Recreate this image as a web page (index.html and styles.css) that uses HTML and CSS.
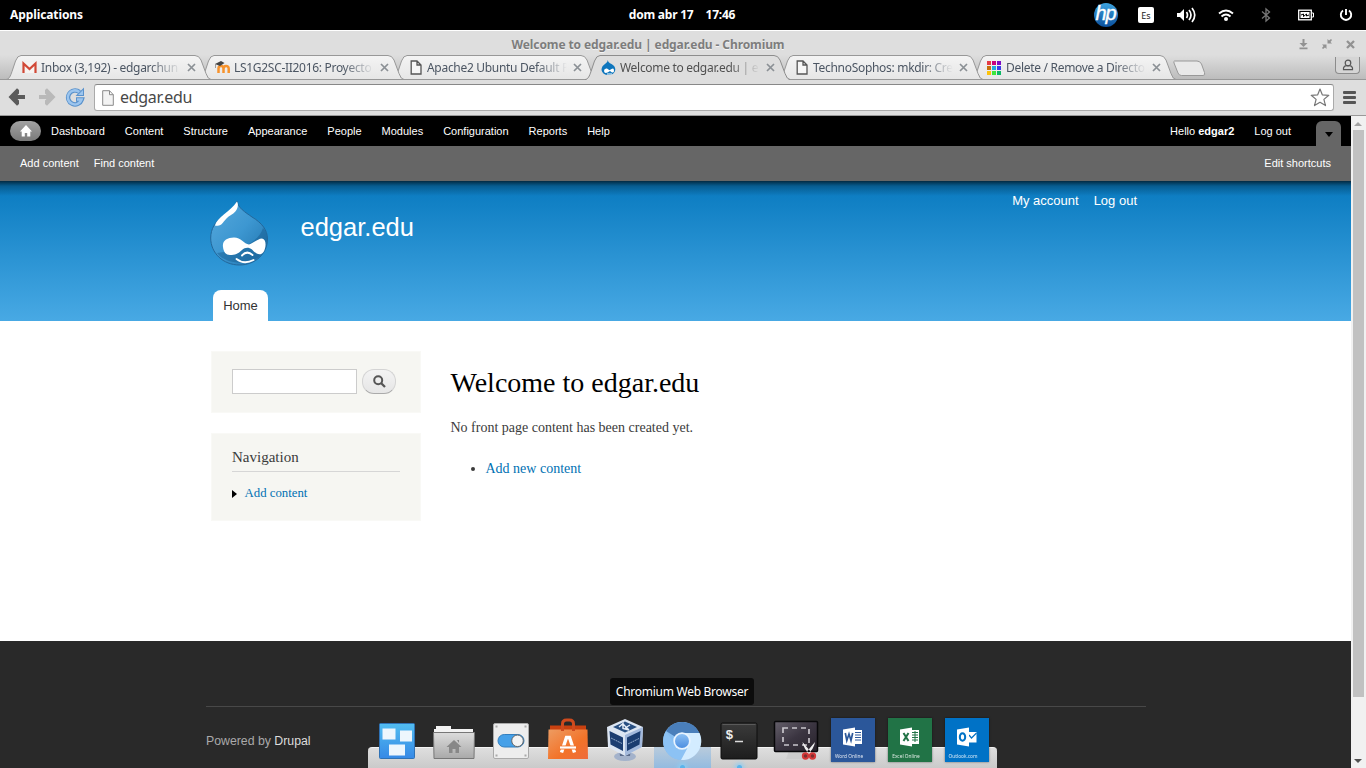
FILE: index.html
```html
<!DOCTYPE html>
<html lang="en">
<head>
<meta charset="utf-8">
<title>Welcome to edgar.edu | edgar.edu</title>
<link rel="stylesheet" href="styles.css">
</head>
<body>
<svg class="defs" width="0" height="0" aria-hidden="true">
  <defs>
    <linearGradient id="tabFill" x1="0" y1="0" x2="0" y2="1"><stop offset="0" stop-color="#f4f4f4"/><stop offset="1" stop-color="#e6e6e6"/></linearGradient>
    <linearGradient id="dropFill" x1="0" y1="0" x2="1" y2="1"><stop offset="0" stop-color="#58a9dc"/><stop offset=".5" stop-color="#3d97d1"/><stop offset="1" stop-color="#1d70aa"/></linearGradient>
    <linearGradient id="winFill" x1="0" y1="0" x2="0" y2="1"><stop offset="0" stop-color="#52bdf0"/><stop offset="1" stop-color="#3689e6"/></linearGradient>
    <linearGradient id="folderFill" x1="0" y1="0" x2="0" y2="1"><stop offset="0" stop-color="#dcdcdc"/><stop offset="1" stop-color="#a9a9a9"/></linearGradient>
    <linearGradient id="bagFill" x1="0" y1="0" x2="1" y2="1"><stop offset="0" stop-color="#ed9c62"/><stop offset=".6" stop-color="#f37329"/><stop offset="1" stop-color="#ee6b3c"/></linearGradient>
    <linearGradient id="termFill" x1="0" y1="0" x2="0" y2="1"><stop offset="0" stop-color="#3b3b3b"/><stop offset="1" stop-color="#1d1d1d"/></linearGradient>
    <linearGradient id="screenFill" x1="0" y1="0" x2="1" y2="1"><stop offset="0" stop-color="#65606b"/><stop offset=".5" stop-color="#3b3541"/><stop offset="1" stop-color="#28232c"/></linearGradient>
    <linearGradient id="coreFill" x1="0" y1="0" x2="0" y2="1"><stop offset="0" stop-color="#8cc0f4"/><stop offset="1" stop-color="#4d8ee0"/></linearGradient>
    <linearGradient id="hpFill" x1="0" y1="0" x2="0" y2="1"><stop offset="0" stop-color="#3da3de"/><stop offset="1" stop-color="#0a4f9c"/></linearGradient>
    <symbol id="tab" viewBox="0 0 206 25">
      <path d="M0 24.500C3 24.500 4.500 21 6 16.500L9.500 6Q11.500.5 15 .5H189Q193 .5 195 5L200 18.500Q202 24.500 205 24.500Z" fill="url(#tabFill)" stroke="#989898"/>
    </symbol>
    <symbol id="tabOn" viewBox="0 0 206 25">
      <path d="M0 25C3 24.500 4.500 21 6 16.500L9.500 6Q11.500.5 15 .5H189Q193 .5 195 5L200 18.500Q202 24.500 205 25Z" fill="#dedede"/>
      <path d="M0 24.500C3 24.500 4.500 21 6 16.500L9.500 6Q11.500.5 15 .5H189Q193 .5 195 5L200 18.500Q202 24.500 205 24.500" fill="none" stroke="#8d8d8d"/>
    </symbol>
    <symbol id="x" viewBox="0 0 9 9"><path d="M1 1l7 7M8 1l-7 7" stroke="#8b9095" stroke-width="1.700"/></symbol>
    <symbol id="doc" viewBox="0 0 12 15"><path d="M1.200 1H7l4 4v9H1.200zM7 1v4h4" fill="#f6f6f6" stroke="#555" stroke-width="1.300"/></symbol>
    <symbol id="drop" viewBox="0 0 58 66">
      <path d="M27 0C28 7 35 11 42 16C52 22 57.500 29 57.500 38C57.500 53 45 64 29.500 64C13 64 .7 52 .7 37C.7 28 5 21 12 16C20 11 25.500 7 27 0Z" fill="url(#dropFill)" stroke="#23679a"/>
      <path d="M53 27C49 39 37 48 7 52C17 66 57 68 57 37C57 33 55.500 29 53 27Z" fill="#14598c" opacity=".45"/>
      <path d="M5 24.500C7 16 20 11 27 .5C29 4 28 10 21 14C14 18 13 24 9 24.500Q6 25 5 24.500Z" fill="#fff"/>
      <path d="M13 46C12 40 17 36.500 24 36.500C31 36.500 34 43 39 43.500C44 42 48 37.500 52 37.500C57 38.500 56 47 53.500 51C50 56 45 52 42 48.500C39 46 35 46 32 49C28 53 25 54 20 54C16 54 13.500 51 13 46Z" fill="#fff"/>
      <path d="M32 54.500Q37 49 42.500 54M26.500 58Q34 64 43.500 59" fill="none" stroke="#fff" stroke-width="1.900" stroke-linecap="round"/>
    </symbol>
  </defs>
</svg>

<header class="panel">
  <div class="panel-apps">Applications</div>
  <div class="panel-clock"><span class="date">dom abr 17</span><span class="time">17:46</span></div>
  <div class="panel-tray">
    <svg class="hp" width="26" height="26" viewBox="0 0 26 26"><circle cx="13" cy="13" r="12" fill="url(#hpFill)"/><text x="12.500" y="18" class="hptext">hp</text></svg>
    <span class="lang">Es</span>
    <svg class="vol" width="20" height="18" viewBox="0 0 20 18"><path d="M1 7h3l4-4v12l-4-4H1z" fill="#fff"/><path d="M10.500 6Q12.500 9 10.500 12M13 4Q17 9 13 14M16 2Q21.500 9 16 16" fill="none" stroke="#fff" stroke-width="1.700"/></svg>
    <svg class="wifi" width="16" height="14" viewBox="0 0 16 14"><path d="M1 5.500Q8-.5 15 5.500M3.500 8.500Q8 4.500 12.500 8.500" fill="none" stroke="#fff" stroke-width="1.900"/><circle cx="8" cy="11" r="2" fill="#fff"/></svg>
    <svg class="bt" width="10" height="16" viewBox="0 0 10 16"><path d="M1 4.500l7.500 6.500L5 14V2l3.500 3L1 11.500" fill="none" stroke="#777" stroke-width="1.300"/></svg>
    <svg class="bat" width="16" height="12" viewBox="0 0 16 12"><rect x=".7" y="1.200" width="12.600" height="9.600" fill="none" stroke="#fff" stroke-width="1.300"/><path d="M14 4h1.500v4H14" fill="none" stroke="#fff"/><rect x="2.500" y="3" width="9" height="6" fill="#fff"/><path d="M3 6l2.500-1v2.500L8.500 5v2L11 6" fill="none" stroke="#000"/></svg>
    <svg class="power" width="14" height="14" viewBox="0 0 14 14"><path d="M4 2.500A5.200 5.200 0 1 0 10 2.500M7 1v6" fill="none" stroke="#fff" stroke-width="1.900"/></svg>
  </div>
</header>

<div class="titlebar">
  <div class="title">Welcome to edgar.edu | edgar.edu - Chromium</div>
  <div class="winbtns">
    <svg width="9" height="11" viewBox="0 0 9 11"><path d="M4.500 0v5" stroke="#929292" stroke-width="2"/><path d="M.5 4h8l-4 4zM.5 8.500h8v1.700h-8z" fill="#929292"/></svg>
    <svg width="10" height="10" viewBox="0 0 10 10"><path d="M0 5.500h4.500V10L3 8.500 1 10 0 9l1.500-2zM5.500 0v4.500H10L8.500 3 10 1 9 0 7 1.500z" fill="#929292"/></svg>
    <svg width="9" height="9" viewBox="0 0 9 9"><path d="M1 1l7 7M8 1l-7 7" stroke="#929292" stroke-width="2.300"/></svg>
  </div>
</div>

<div class="tabstrip">
  <div class="tab t1"><svg class="shape"><use href="#tab"/></svg>
    <svg class="fav" viewBox="0 0 15 15"><rect x="1" y="2.500" width="13" height="10.500" fill="#f6f3f1"/><path d="M1.500 13V3.500L7.500 9l6-5.500V13" fill="none" stroke="#d14836" stroke-width="2.200"/></svg>
    <span class="tabtext">Inbox (3,192) - edgarchun</span><svg class="close"><use href="#x"/></svg></div>
  <div class="tab t2"><svg class="shape"><use href="#tab"/></svg>
    <svg class="fav" viewBox="0 0 15 15"><path d="M3.500 13V8.500Q3.500 6 6 6t2.500 2.500V13M8.500 9Q8.500 6 11 6t2.700 2.500V13" fill="none" stroke="#f7932d" stroke-width="2.500"/><path d="M0 4l6-3 3.500 2L5 6z" fill="#444"/><path d="M.5 4v4" stroke="#888" stroke-width=".8"/></svg>
    <span class="tabtext">LS1G2SC-II2016: Proyecto</span><svg class="close"><use href="#x"/></svg></div>
  <div class="tab t3"><svg class="shape"><use href="#tab"/></svg>
    <svg class="fav doc"><use href="#doc"/></svg>
    <span class="tabtext">Apache2 Ubuntu Default P</span><svg class="close"><use href="#x"/></svg></div>
  <div class="tab t4"><svg class="shape"><use href="#tabOn"/></svg>
    <svg class="fav dropfav" viewBox="0 0 15 16"><path d="M6.800 0Q7 2.500 10.500 4Q14.500 6 14.300 10A7 6 0 0 1 .5 10Q.5 6 4 4Q6.800 2.500 6.800 0Z" fill="#0e76bd"/><path d="M3 11q0-3 3-2.500l2.500 1.800Q12 7.500 12.700 9q1 4-1.700 3.500L9 11Q3.500 15 3 11z" fill="#fff"/><path d="M6 14h5" stroke="#fff"/></svg>
    <span class="tabtext on">Welcome to edgar.edu | e</span><svg class="close"><use href="#x"/></svg></div>
  <div class="tab t5"><svg class="shape"><use href="#tab"/></svg>
    <svg class="fav doc"><use href="#doc"/></svg>
    <span class="tabtext">TechnoSophos: mkdir: Cre</span><svg class="close"><use href="#x"/></svg></div>
  <div class="tab t6"><svg class="shape"><use href="#tab"/></svg>
    <svg class="fav" viewBox="0 0 15 15"><path d="M0 1h4v4H0z" fill="#e53b46"/><path d="M5 1h4v4H5z" fill="#c8007c"/><path d="M10 1h4v4h-4z" fill="#7c0bc6"/><path d="M0 6h4v4H0z" fill="#c7700b"/><path d="M5 6h4v4H5z" fill="#20a7df"/><path d="M10 6h4v4h-4z" fill="#3b3be8"/><path d="M0 11h4v4H0z" fill="#fdc30b"/><path d="M5 11h4v4H5z" fill="#3be63b"/><path d="M10 11h4v4h-4z" fill="#0bb865"/></svg>
    <span class="tabtext">Delete / Remove a Directo</span><svg class="close"><use href="#x"/></svg></div>
  <svg class="newtab" width="33" height="17" viewBox="0 0 33 17"><path d="M1.500 1H24Q27 1 28.500 4L31.500 12.500Q32.500 15.500 30 15.500H8.500Q6 15.500 5 13L1 3Q.5 1 1.500 1Z" fill="#e9e9e9" stroke="#999"/></svg>
  <div class="userbtn"><svg width="12" height="12" viewBox="0 0 12 12"><circle cx="6" cy="4" r="2.800" fill="none" stroke="#555" stroke-width="1.200"/><path d="M1.500 10.700V9Q2 7 4.500 6.700h3Q10 7 10.500 9v1.700z" fill="none" stroke="#555" stroke-width="1.200"/></svg></div>
</div>

<div class="navbar">
  <svg class="back" width="18" height="20" viewBox="0 0 18 20"><path d="M9 1.200L11 3v3.500L9.500 8H17v4H9.500l1.500 1.500V17l-2 1.800L.5 10z" fill="#5b5b5b"/></svg>
  <svg class="fwd" width="18" height="20" viewBox="0 0 18 20"><path d="M9 1.200L7 3v3.500L8.500 8H1v4h7.500L7 13.500V17l2 1.800 8.500-8.800z" fill="#b9b9b9"/></svg>
  <svg class="reload" width="20" height="20" viewBox="0 0 20 20"><path d="M14.500 5A7 7 0 1 0 16.800 12.500H11" fill="none" stroke="#5a92cc" stroke-width="4.400"/><path d="M19 .5V9h-8.500z" fill="#5a92cc"/><path d="M14.300 5A7 7 0 1 0 16.500 12.500H12" fill="none" stroke="#9cc5ee" stroke-width="2.500"/><path d="M18 3v5h-5z" fill="#9cc5ee"/></svg>
  <div class="omnibox">
    <svg width="12" height="16" viewBox="0 0 12 16"><path d="M.7.7H7.500l3.800 4V15.300H.7zM7.500.7v4h3.800" fill="#f3f3f3" stroke="#8a8a8a"/></svg>
    <span class="url">edgar.edu</span>
    <svg class="star" width="20" height="19" viewBox="0 0 20 19"><path d="M10 1L12.300 6.800 18.800 7.300 13.900 11.400 15.500 17.600 10 14.300 4.500 17.600 6.100 11.400 1.200 7.300 7.700 6.800z" fill="#fff" stroke="#777" stroke-width="1.200" stroke-linejoin="round"/></svg>
  </div>
  <div class="burger"><i></i><i></i><i></i></div>
</div>

<div class="viewport">
  <div class="site">
    <nav class="admin">
      <span class="homebtn"><svg width="12" height="12" viewBox="0 0 12 12"><path d="M6 0l6 6.500h-1.700V11.500H7.200V8H4.800v3.500H1.700v-5H0z" fill="#fff"/></svg></span>
      <a>Dashboard</a><a>Content</a><a>Structure</a><a>Appearance</a><a>People</a><a>Modules</a><a>Configuration</a><a>Reports</a><a>Help</a>
      <span class="hello">Hello <b>edgar2</b></span><a class="logout">Log out</a>
      <span class="toggle"><i></i></span>
    </nav>
    <div class="shortcuts"><a>Add content</a><a>Find content</a><a class="edit">Edit shortcuts</a></div>
    <div class="banner">
      <div class="wrap">
        <div class="brand"><svg width="58" height="66" viewBox="0 0 58 66"><use href="#drop"/></svg><span>edgar.edu</span></div>
        <div class="usermenu"><a>My account</a><a>Log out</a></div>
        <div class="hometab">Home</div>
      </div>
    </div>
    <main class="main">
      <aside class="side">
        <div class="block search"><span class="field"></span><span class="go"><svg width="13" height="13" viewBox="0 0 13 13"><circle cx="5.200" cy="5.200" r="4" fill="none" stroke="#555" stroke-width="2"/><path d="M8 8l4 4" stroke="#555" stroke-width="2.300"/></svg></span></div>
        <div class="block navblock"><h2>Navigation</h2><div class="leaf"><i></i><a>Add content</a></div></div>
      </aside>
      <section class="content">
        <h1>Welcome to edgar.edu</h1>
        <p>No front page content has been created yet.</p>
        <ul><li><a>Add new content</a></li></ul>
      </section>
    </main>
    <footer class="foot"><div class="credit">Powered by <a>Drupal</a></div></footer>
  </div>
  <div class="scroll"><i class="up"></i><i class="thumb"></i><i class="down"></i></div>
</div>

<div class="tooltip">Chromium Web Browser</div>
<div class="dock">
  <div class="item"><svg width="48" height="48" viewBox="0 0 48 48"><rect x="6.500" y="6.500" width="35" height="35" rx="1" fill="url(#winFill)" stroke="#2f72b5"/><path d="M9.500 11.500h13v11h-13zM27 13.500h12v11H27zM16 27.500h16v11H16z" fill="#edf6fd"/></svg></div>
  <div class="item"><svg width="48" height="48" viewBox="0 0 48 48"><path d="M6 9h15v3h22v6H4v-6h2z" fill="#f2f2f2"/><path d="M3.500 15.500h41L44 41.500H4z" fill="url(#folderFill)" stroke="#777"/><path d="M24 23l7.500 7H29v6h-3.500v-4h-3v4H19v-6h-2.500zM27 23h2v3z" fill="#888"/></svg></div>
  <div class="item"><svg width="48" height="48" viewBox="0 0 48 48"><rect x="6.500" y="6.500" width="35" height="35" rx="1.500" fill="#ededed" stroke="#aaa"/><rect x="11" y="17.500" width="26" height="12.500" rx="6.250" fill="#45a0e8" stroke="#337fbe"/><circle cx="30.500" cy="23.800" r="5.800" fill="#f4f4f4" stroke="#666"/><path d="M8.500 8.500h2v2h-2zM37.500 8.500h2v2h-2zM8.500 37.500h2v2h-2zM37.500 37.500h2v2h-2z" fill="#aaa"/></svg></div>
  <div class="item"><svg width="48" height="48" viewBox="0 0 48 48"><path d="M6 8.500h36v5H6z" fill="#c94110"/><path d="M4.500 12.500h39l.5 29.500H4z" fill="url(#bagFill)"/><path d="M18.500 14V7q0-4 4-4h3q4 0 4 4v7" fill="none" stroke="#cf4a1d" stroke-width="3"/><path d="M17.500 35.500L22.500 20.500h3L30.500 35.500" fill="none" stroke="#fff" stroke-width="3.400"/><path d="M16 30.500h16" stroke="#f37329" stroke-width="4"/><path d="M16 30.500h16" stroke="#fff" stroke-width="2.200"/></svg></div>
  <div class="item"><svg width="48" height="48" viewBox="0 0 48 48"><ellipse cx="24" cy="39.500" rx="11" ry="4.500" fill="#a3b2cb"/><path d="M18 30h12l-1 9H19z" fill="#5a6b8b"/><path d="M24 2l18 8-1 20-17 9L7 30 6 10z" fill="#dce5f2"/><path d="M24 18l18-8-1 20-17 9z" fill="#a3b9dc"/><path d="M8.500 14L22 20.500v13.500L9.500 27.500zM39.500 14L26 20.500v13.500l12.500-6.500z" fill="#1b3d71"/><path d="M24 4.500l12 5.500-12 5.500-12-5.500z" fill="#284f82"/><path d="M18 10l4-3.500v5l6 1.500M22 7l6 6M29 8l-5 3" stroke="#e5edf8" stroke-width="1.400" fill="none"/><path d="M10 21l11 5.500M27 27l11-5.500" stroke="#8fa7c8" stroke-dasharray="2 .6"/></svg></div>
  <div class="item active"><svg width="48" height="48" viewBox="0 0 48 48"><circle cx="24" cy="24" r="19" fill="#86bdf0"/><path d="M24 24L8 14A19 19 0 0 1 41.500 16z" fill="#4a7fbb"/><path d="M8 14A19 19 0 0 0 23 43L31 28 18 29z" fill="#8cc2f4"/><path d="M24 16h17.500A19 19 0 0 1 23 43l8-15z" fill="#d3ecff"/><circle cx="24" cy="24" r="8.700" fill="#e9f4ff"/><circle cx="24" cy="24" r="7" fill="url(#coreFill)"/></svg><i class="run"></i></div>
  <div class="item"><svg width="48" height="48" viewBox="0 0 48 48"><rect x="6" y="6" width="36" height="36" rx="1.500" fill="url(#termFill)" stroke="#0e0e0e"/><path d="M7.500 7.500h33" stroke="#5a5a5a"/><text x="10.500" y="22" class="prompt">$</text><path d="M20 24.500h8" stroke="#ddd" stroke-width="1.500"/></svg><i class="run"></i></div>
  <div class="item"><svg width="48" height="48" viewBox="0 0 48 48"><path d="M17 34h14l3 8H14z" fill="#ccc"/><rect x="2.500" y="4.500" width="43" height="30" rx="1" fill="url(#screenFill)" stroke="#08080a" stroke-width="1.500"/><rect x="11" y="11" width="26" height="17" fill="none" stroke="#c8c5cb" stroke-width="1.700" stroke-dasharray="5 4"/><path d="M30.500 25q1 7 7.500 12l1-2zM43 25q-1 7-7.500 12l-1-2z" fill="#eee"/><circle cx="33.500" cy="39" r="2.700" fill="#7c3030" stroke="#d63838" stroke-width="1.900"/><circle cx="40.500" cy="39" r="2.700" fill="#7c3030" stroke="#d63838" stroke-width="1.900"/></svg></div>
  <div class="item"><div class="tile word"><svg width="20" height="20" viewBox="0 0 20 20"><path d="M11 3h8v14h-8" fill="#fff"/><path d="M12 5.500h6M12 8h6M12 10.500h6M12 13h6" stroke="#2b579a"/><path d="M0 2.500L12 .5v19L0 17.500z" fill="#fff"/><path d="M2.300 6l1.500 7.500L6 7l2 6.500L9.700 6" fill="none" stroke="#2b579a" stroke-width="1.700"/></svg><span>Word Online</span></div></div>
  <div class="item"><div class="tile excel"><svg width="20" height="20" viewBox="0 0 20 20"><path d="M11 3h8v14h-8" fill="#fff"/><path d="M12 5.500h6M12 8h6M12 10.500h6M12 13h6M15 4v11" stroke="#217346"/><path d="M0 2.500L12 .5v19L0 17.500z" fill="#fff"/><path d="M3.500 6l5 8M8.500 6l-5 8" stroke="#217346" stroke-width="2"/></svg><span>Excel Online</span></div></div>
  <div class="item"><div class="tile outlook"><svg width="20" height="20" viewBox="0 0 20 20"><path d="M11 5h8.500v10.500H11" fill="#fff"/><path d="M12 8l2.500 3L19.500 6" fill="none" stroke="#0072c6" stroke-width="1.200"/><path d="M0 2.500L12 .5v19L0 17.500z" fill="#fff"/><ellipse cx="5.500" cy="10" rx="2.700" ry="3.700" fill="none" stroke="#0072c6" stroke-width="2"/></svg><span>Outlook.com</span></div></div>
</div>
</body>
</html>
```
FILE: styles.css
```css
* { box-sizing: border-box; }
body { margin: 0; width: 1366px; height: 768px; overflow: hidden; position: relative; display: flex; flex-direction: column; background: #000; font-family: "Liberation Sans", Arial, sans-serif; }
svg { display: block; flex: none; }
.defs { position: absolute; }

/* desktop panel */
.panel { height: 30px; flex: none; display: grid; grid-template-columns: 1fr auto 1fr; align-items: center; background: #000; color: #fff; font: bold 12px/30px "Noto Sans", sans-serif; }
.panel-apps { padding-left: 10px; letter-spacing: -.1px; }
.panel-clock { display: flex; gap: 12px; letter-spacing: -.22px; margin-right: 2px; }
.panel-tray { display: flex; align-items: center; justify-content: flex-end; padding-right: 13px; }
.hptext { fill: #fff; font: italic 20px "Liberation Sans", sans-serif; stroke: #fff; stroke-width: .4px; letter-spacing: -1px; text-anchor: middle; }
.lang { width: 16px; height: 16px; margin: 0 22px 0 19px; border-radius: 2px; background: #fff; color: #222; font: 9px/17px "Noto Sans", sans-serif; text-align: center; }
.wifi { margin-left: 22px; }
.bt { margin-left: 27px; }
.bat { margin-left: 27px; }
.power { margin-left: 25px; }

/* window frame */
.titlebar { height: 25px; flex: none; border-top: 1px solid #fff; background: #dedede; display: grid; grid-template-columns: 1fr auto 1fr; align-items: center; }
.title { grid-column: 2; margin: 0 70px 0 0; padding-top: 1px; color: #7d7d7d; font: bold 12px/25px "Noto Sans", sans-serif; letter-spacing: -.1px; text-shadow: 0 1px #f4f4f4; white-space: nowrap; }
.winbtns { grid-column: 3; display: flex; justify-content: flex-end; align-items: center; gap: 14px; padding: 0 11px 0 0; }
.tabstrip { height: 25px; flex: none; display: flex; padding-left: 7px; position: relative; background: linear-gradient(#dedede, #bcbcbc); border-bottom: 1px solid #989898; }
.tab { width: 193px; flex: none; position: relative; display: flex; align-items: center; padding-left: 15px; height: 25px; }
.shape { position: absolute; left: -1px; top: 0; width: 206px; height: 25px; }
.t1 { z-index: 6; } .t2 { z-index: 5; } .t3 { z-index: 4; } .t4 { z-index: 9; } .t5 { z-index: 3; } .t6 { z-index: 2; }
.fav { position: relative; width: 15px; height: 15px; margin-right: 4px; }
.fav.doc { width: 12px; margin: 0 5px 0 2px; }
.dropfav { height: 16px; }
.tabtext { position: relative; width: 140px; white-space: nowrap; color: #4c5663; font: 12px/24px "Noto Sans", sans-serif; letter-spacing: -.3px; -webkit-mask-image: linear-gradient(90deg, #000 78%, transparent 100%); mask-image: linear-gradient(90deg, #000 78%, transparent 100%); }
.tabtext.on { color: #505050; }
.close { position: relative; width: 9px; height: 9px; margin-left: 6px; }
.newtab { margin: 5px 0 0 8px; }
.userbtn { margin: 2px 6px 0 auto; width: 25px; height: 17px; border: 1px solid #8c8c8c; border-top: 0; border-radius: 0 0 4px 4px; display: flex; justify-content: center; align-items: center; background: #d5d5d5; }
.navbar { height: 36px; flex: none; display: flex; align-items: center; padding: 0 10px 2px 8px; background: #dedede; border-bottom: 1px solid #999; }
.back { margin-left: 0; }
.fwd { margin-left: 12px; }
.reload { margin: 0 9px 0 9px; }
.omnibox { flex: 1; height: 27px; margin-top: 2px; display: flex; align-items: center; padding: 0 3px 0 7px; background: #fff; border: 1px solid #aaa; border-top-color: #888; border-radius: 3px; }
.url { margin-left: 6px; color: #484848; font: 16px/24px "Noto Sans", sans-serif; letter-spacing: -.3px; padding-bottom: 2px; }
.star { margin-left: auto; }
.burger { display: grid; gap: 2px; margin: 2px 0 0 9px; }
.burger i { width: 13px; height: 3px; background: #555; border-radius: 1px; }

/* web page */
.viewport { flex: 1; display: flex; min-height: 0; }
.site { width: 1351px; display: flex; flex-direction: column; background: #fff; }
.admin { height: 30px; flex: none; display: flex; align-items: center; padding-left: 10px; background: #000; color: #fff; font-size: 11px; }
.homebtn { width: 31px; height: 20px; border-radius: 10px; background: linear-gradient(#a2a2a2, #7a7a7a); display: flex; align-items: center; justify-content: center; }
.admin a { padding: 0 10px; }
.hello { margin-left: auto; padding: 0 10px; }
.toggle { width: 25px; height: 25px; margin: 5px 10px 0 15px; border-radius: 6px 6px 0 0; background: #666; display: flex; align-items: center; justify-content: center; }
.toggle i { border: 4px solid transparent; border-top: 5px solid #000; border-bottom: 0; margin-top: 1px; }
.shortcuts { height: 35px; flex: none; display: flex; gap: 15px; padding: 0 20px; background: #666; color: #fff; font-size: 11px; line-height: 34px; }
.edit { margin-left: auto; }
.banner { height: 140px; flex: none; background: linear-gradient(rgba(0,0,0,.65), rgba(0,0,0,.25) 5px, transparent 15px), linear-gradient(#0779bf, #48a9e4); color: #fff; }
.wrap { height: 140px; margin: 0 214px 0 213px; display: grid; grid-template-columns: 1fr auto; grid-template-rows: 109px 31px; }
.brand { display: flex; gap: 33px; margin-left: -3.500px; padding-top: 20px; font-size: 25.500px; line-height: 52px; }
.usermenu { display: flex; gap: 15px; font-size: 13px; padding-top: 12px; }
.hometab { width: 55px; height: 31px; border-radius: 8px 8px 0 0; background: #fff; color: #333; font-size: 13px; line-height: 31px; text-align: center; }
.main { height: 320px; flex: none; display: flex; gap: 29.500px; padding: 30px 0 0 211px; font-family: "Liberation Serif", serif; color: #3b3b3b; }
.side { width: 210px; display: flex; flex-direction: column; gap: 20px; }
.block { background: #f6f6f2; border: 1px solid #f9f9f6; }
.search { height: 62px; display: flex; gap: 5px; padding: 17px 20px; }
.field { width: 125px; height: 25px; border: 1px solid #ccc; background: #fff; }
.go { width: 34px; height: 25px; border: 1px solid #d4d4d4; border-bottom-color: #aaa; border-radius: 12px; background: linear-gradient(#f3f3f3, #e6e6e6); display: flex; align-items: center; justify-content: center; }
.navblock { height: 88px; padding: 14px 20px; }
.navblock h2 { margin: 0 0 14px; height: 24px; border-bottom: 1px solid #d6d6d6; font: 15px/19px "Liberation Serif", serif; }
.leaf { display: flex; align-items: center; gap: 7.500px; font-size: 12.800px; line-height: 15px; }
.leaf i { border: 4px solid transparent; border-left: 5px solid #000; border-right: 0; }
.leaf a, .content a { color: #0071b3; }
.content h1 { margin: 15px 0 0; color: #000; font: 28px/34px "Liberation Serif", serif; }
.content p { margin: 18px 0 21px; font-size: 14px; line-height: 20px; }
.content ul { margin: 0; padding-left: 35px; font-size: 14px; line-height: 20px; }
.foot { flex: 1; padding: 65px 205px 0 206px; background: #292929; }
.credit { border-top: 1px solid #484848; padding-top: 26px; font-size: 12.300px; line-height: 16px; color: #aaa; }
.credit a { color: #ddd; }
.scroll { width: 15px; display: flex; flex-direction: column; align-items: center; background: #f1f1f1; padding: 6px 1px 5px 0; }
.up { border: 4px solid transparent; border-bottom: 4px solid #a3a3a3; border-top: 0; }
.thumb { width: 11px; height: 567px; margin-top: 4px; background: #c1c1c1; }
.down { margin-top: auto; border: 4px solid transparent; border-top: 4px solid #505050; border-bottom: 0; }

/* dock over the page */
.tooltip { position: absolute; left: 610px; top: 678px; width: 144px; height: 27px; border-radius: 3px; background: #0c0c0c; color: #fff; font: 12px/27px "Noto Sans", sans-serif; letter-spacing: -.27px; text-align: center; white-space: nowrap; z-index: 20; }
.dock { position: absolute; left: 368px; top: 716px; width: 629px; height: 52px; padding-left: .5px; display: flex; clip-path: inset(0); z-index: 20; }
.dock::before { content: ""; position: absolute; left: 0; top: 31px; width: 100%; height: 21px; border-radius: 4px 4px 0 0; background: linear-gradient(#dedede, #c9c9c9); border-top: 1px solid #f3f3f3; }
.item { position: relative; width: 57px; display: flex; justify-content: center; align-items: flex-start; padding-top: 1px; }
.active { background: linear-gradient(#b9cbdc, #93bbe0) 0 31px / 100% 21px no-repeat; }
.run { position: absolute; left: 26px; bottom: -2px; width: 5px; height: 5px; border-radius: 50%; background: #5cb4ea; box-shadow: 0 0 4px 2px #8fcdf3; }
.prompt { fill: #eee; font: bold 13px "Liberation Mono", monospace; }
.tile { width: 44px; height: 44px; margin-top: 1px; padding-top: 9px; color: #fff; display: flex; flex-direction: column; align-items: center; box-shadow: 0 0 2px rgba(0,0,0,.5); }
.tile span { font: 4.800px/6px "Noto Sans", sans-serif; margin-top: 6px; margin-right: 8px; white-space: nowrap; opacity: .85; }
.word { background: #2b579a; } .excel { background: #217346; } .outlook { background: #0072c6; }
```
